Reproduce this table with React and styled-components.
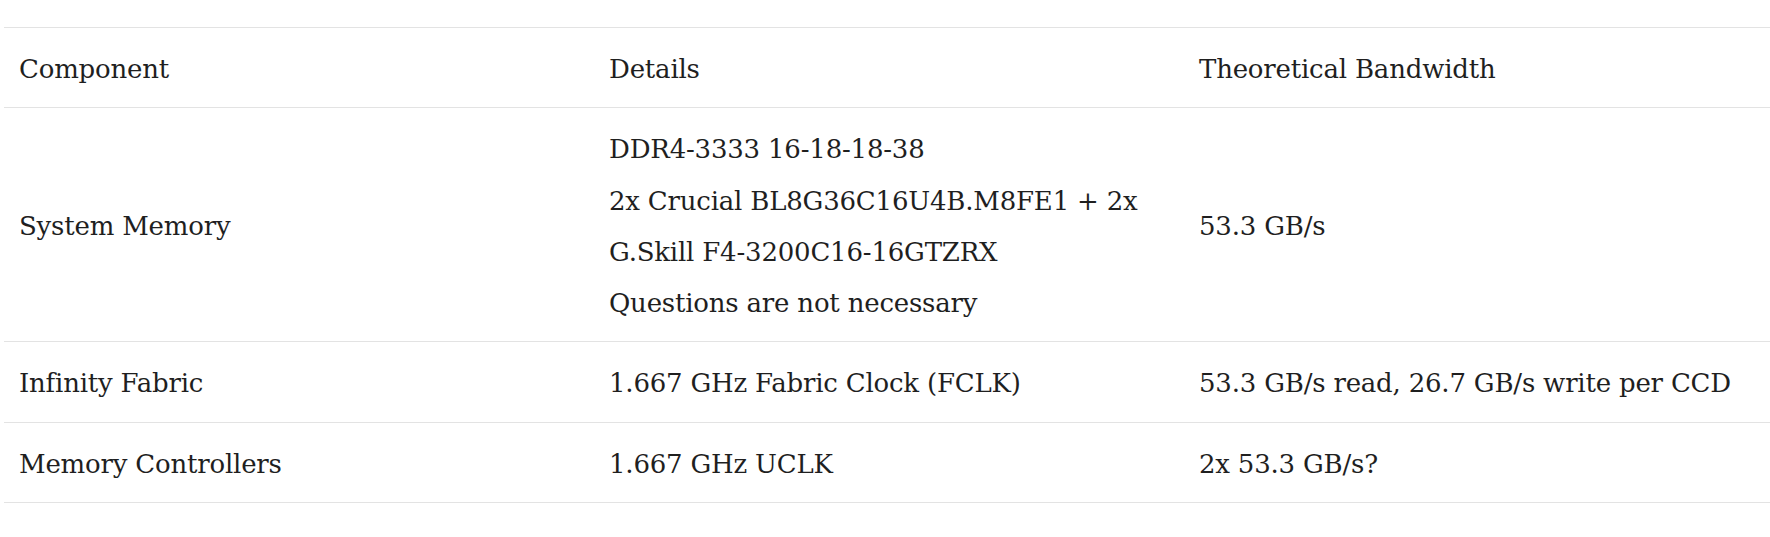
import React from "react";
import styled, { createGlobalStyle } from "styled-components";

const Global = createGlobalStyle`
  html, body {
    margin: 0;
    padding: 0;
    background: #ffffff;
  }
  body {
    font-family: "DejaVu Serif", "Liberation Serif", serif;
    color: #222222;
  }
`;

const Page = styled.div`
  width: 100%;
  overflow: hidden;
  padding: 27px 0 0 4px;
  box-sizing: border-box;
`;

const Table = styled.table`
  width: 1770px;
  border-collapse: collapse;
  table-layout: fixed;
  font-size: 26px;
  letter-spacing: -0.2px;
  line-height: 51.3px;
  color: #1f1f1f;
`;

const Row = styled.tr`
  border-top: 1px solid #e3e3e3;
  border-bottom: 1px solid #e3e3e3;
`;

const Cell = styled.td`
  padding: 16px 15px 12px;
  vertical-align: middle;
  text-align: left;
  font-weight: normal;
`;

const HeadCell = styled(Cell).attrs({ as: "th" })``;

const Line = styled.span`
  display: block;
  white-space: nowrap;
`;

const rows = [
  {
    component: "System Memory",
    details: [
      "DDR4-3333 16-18-18-38",
      "2x Crucial BL8G36C16U4B.M8FE1 + 2x",
      "G.Skill F4-3200C16-16GTZRX",
      "Questions are not necessary",
    ],
    bandwidth: "53.3 GB/s",
  },
  {
    component: "Infinity Fabric",
    details: ["1.667 GHz Fabric Clock (FCLK)"],
    bandwidth: "53.3 GB/s read, 26.7 GB/s write per CCD",
  },
  {
    component: "Memory Controllers",
    details: ["1.667 GHz UCLK"],
    bandwidth: "2x 53.3 GB/s?",
  },
];

export default function App() {
  return (
    <>
      <Global />
      <Page>
        <Table>
          <thead>
            <Row>
              <HeadCell>Component</HeadCell>
              <HeadCell>Details</HeadCell>
              <HeadCell>Theoretical Bandwidth</HeadCell>
            </Row>
          </thead>
          <tbody>
            {rows.map((r) => (
              <Row key={r.component}>
                <Cell>{r.component}</Cell>
                <Cell>
                  {r.details.map((d) => (
                    <Line key={d}>{d}</Line>
                  ))}
                </Cell>
                <Cell>{r.bandwidth}</Cell>
              </Row>
            ))}
          </tbody>
        </Table>
      </Page>
    </>
  );
}
